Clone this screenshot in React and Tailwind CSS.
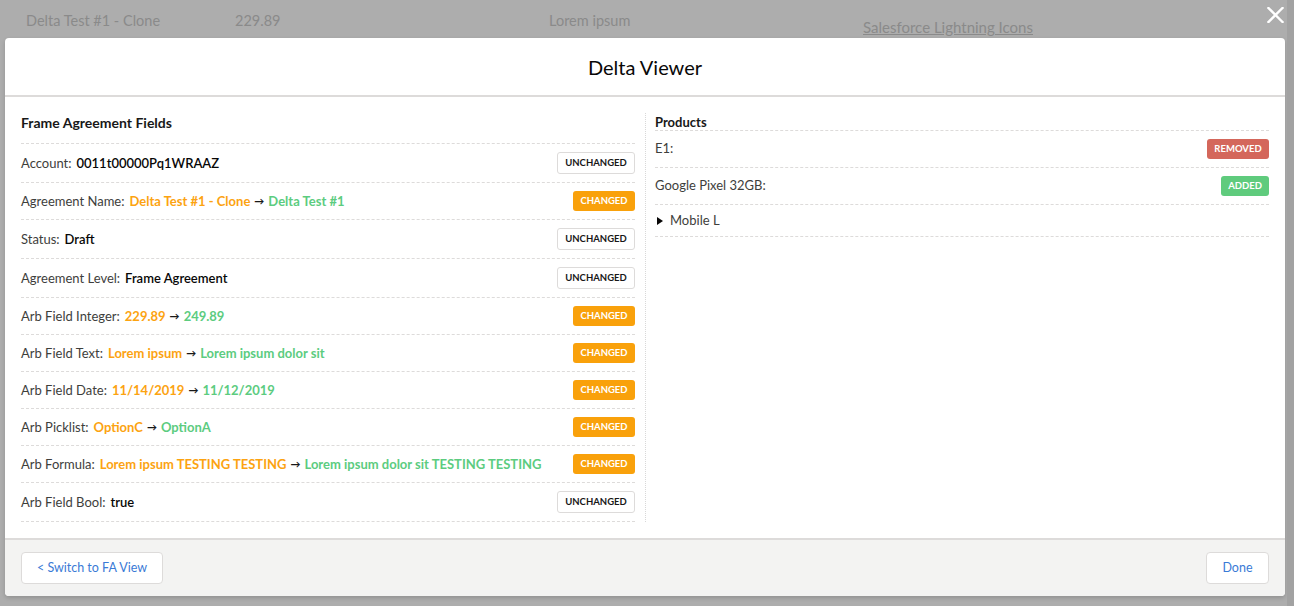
import React from "react";

const fields = [
  { label: "Account", value: "0011t00000Pq1WRAAZ" },
  { label: "Agreement Name", from: "Delta Test #1 - Clone", to: "Delta Test #1" },
  { label: "Status", value: "Draft" },
  { label: "Agreement Level", value: "Frame Agreement" },
  { label: "Arb Field Integer", from: "229.89", to: "249.89" },
  { label: "Arb Field Text", from: "Lorem ipsum", to: "Lorem ipsum dolor sit" },
  { label: "Arb Field Date", from: "11/14/2019", to: "11/12/2019" },
  { label: "Arb Picklist", from: "OptionC", to: "OptionA" },
  { label: "Arb Formula", from: "Lorem ipsum TESTING TESTING", to: "Lorem ipsum dolor sit TESTING TESTING" },
  { label: "Arb Field Bool", value: "true" },
];

function FieldRow({ field }) {
  const changed = !!field.from;
  return (
    <div className="flex items-center justify-between py-[8px] border-b border-dashed border-[#dddbda]">
      <div className="flex items-center text-[13px] leading-[20px]">
        <span className="text-[#3e3e3c]">{field.label}:</span>
        {changed ? (
          <span className="ml-[5px] flex items-center font-bold">
            <span className="text-[#fca311]">{field.from}</span>
            <span className="mx-[4px] text-[10px] text-[#181818]">&rarr;</span>
            <span className="text-[#5ccc7f]">{field.to}</span>
          </span>
        ) : (
          <span className="ml-[5px] font-semibold text-[#080707]">{field.value}</span>
        )}
      </div>
      {changed ? (
        <span className="h-[20px] w-[62px] flex items-center justify-center rounded-[3px] bg-[#f9a10b] text-white text-[9.5px] font-bold">
          CHANGED
        </span>
      ) : (
        <span className="h-[22px] w-[78px] flex items-center justify-center rounded-[3px] border border-[#dddbda] bg-white text-[#181818] text-[9.5px] font-bold">
          UNCHANGED
        </span>
      )}
    </div>
  );
}

function ProductRow({ name, status }) {
  return (
    <div className="flex items-center justify-between py-[8px] border-b border-dashed border-[#dddbda]">
      <span className="text-[13px] text-[#3e3e3c]">{name}</span>
      {status === "removed" ? (
        <span className="h-[20px] w-[62px] flex items-center justify-center rounded-[3px] bg-[#d4675b] text-white text-[9.5px] font-bold">
          REMOVED
        </span>
      ) : (
        <span className="h-[20px] w-[48px] flex items-center justify-center rounded-[3px] bg-[#5fcb7d] text-white text-[9.5px] font-bold">
          ADDED
        </span>
      )}
    </div>
  );
}

export default function App() {
  return (
    <div className="relative flex h-[606px] w-[1294px] overflow-hidden bg-[#adadad] font-['Lato',sans-serif]">
      <div className="flex flex-col w-[1287px]">
        {/* page behind the backdrop */}
        <div className="flex h-[38px] text-[14.5px] text-[#8a8a8a]">
          <span className="ml-[26px] mt-[10px] w-[209px]">Delta Test #1 - Clone</span>
          <span className="mt-[10px] w-[314px]">229.89</span>
          <span className="mt-[10px] w-[314px]">Lorem ipsum</span>
          <span className="mt-[16px] text-[15px] underline">Salesforce Lightning Icons</span>
        </div>

        <div className="ml-[5px] w-[1280px] flex flex-col rounded-[4px] bg-white shadow-[0_2px_4px_rgba(0,0,0,0.16)]">
          <div className="h-[59px] flex items-center justify-center border-b-2 border-[#dddbda]">
            <h2 className="text-[20px] text-[#080707]">Delta Viewer</h2>
          </div>

          <div className="flex px-[16px] pt-[15px] pb-[16px]">
            <div className="w-[614px] flex flex-col">
              <div className="pt-[1px] pb-[11px] border-b border-dashed border-[#dddbda] text-[14px] leading-[19px] font-bold text-[#181818]">
                Frame Agreement Fields
              </div>
              {fields.map((f) => (
                <FieldRow key={f.label} field={f} />
              ))}
            </div>
            <div className="w-[20px] flex justify-center pt-[1px]">
              <div className="border-l border-dotted border-[#d8d8d8]" />
            </div>
            <div className="w-[614px] flex flex-col">
              <div className="pt-[2px] border-b border-dashed border-[#dddbda] text-[13px] leading-[16px] font-bold text-[#181818]">
                Products
              </div>
              <ProductRow name="E1:" status="removed" />
              <ProductRow name="Google Pixel 32GB:" status="added" />
              <div className="h-[32px] flex items-center gap-[7px] border-b border-dashed border-[#dddbda] text-[13px] text-[#3e3e3c]">
                <svg width="6" height="8" viewBox="0 0 6 8" className="ml-[2px]">
                  <path d="M0 0 L6 4 L0 8 Z" fill="#080707" />
                </svg>
                <span>Mobile L</span>
              </div>
            </div>
          </div>

          <div className="h-[58px] flex items-center justify-between px-[16px] rounded-b-[4px] border-t-2 border-[#dddbda] bg-[#f3f3f2]">
            <button className="h-[32px] w-[142px] flex items-center justify-center rounded-[4px] border border-[#dddbda] bg-white text-[12.5px] text-[#3a7ad6]">
              &lt; Switch to FA View
            </button>
            <button className="h-[32px] w-[63px] flex items-center justify-center rounded-[4px] border border-[#dddbda] bg-white text-[12.5px] text-[#3a7ad6]">
              Done
            </button>
          </div>
        </div>
      </div>
      <div className="w-[7px] bg-[#a2a2a2]" />

      <button className="absolute right-[10px] top-[7px] text-white">
        <svg width="17" height="16" viewBox="0 0 17 16">
          <path d="M1.5 1 L15.5 15 M15.5 1 L1.5 15" stroke="white" strokeWidth="2.4" strokeLinecap="square" />
        </svg>
      </button>
    </div>
  );
}
